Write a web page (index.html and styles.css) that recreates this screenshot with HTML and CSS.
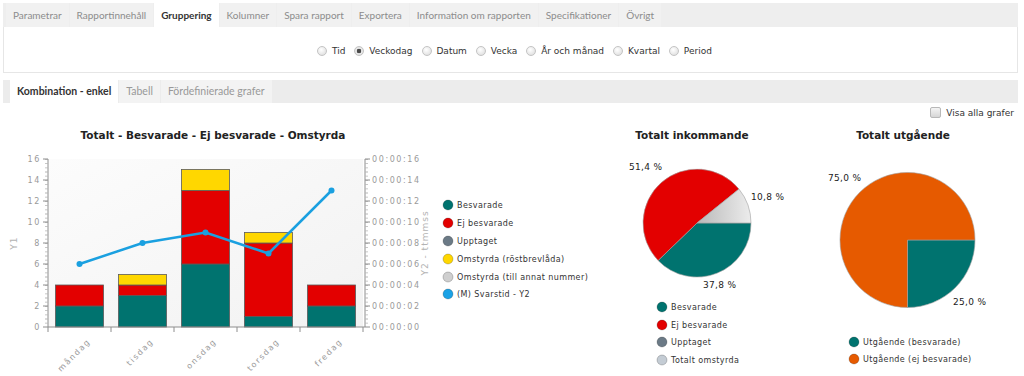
FILE: index.html
```html
<!DOCTYPE html>
<html lang="sv">
<head>
    <meta charset="UTF-8" />
    <meta name="viewport" content="width=device-width, initial-scale=1.0"/>
    <title>Rapport - Gruppering</title>
    <link rel="stylesheet" href="styles.css">
</head>
<body>
    <div class="page">
        <div class="tabbar">
            <div class="tab">Parametrar</div>
            <div class="tab">Rapportinnehåll</div>
            <div class="tab active">Gruppering</div>
            <div class="tab">Kolumner</div>
            <div class="tab">Spara rapport</div>
            <div class="tab">Exportera</div>
            <div class="tab">Information om rapporten</div>
            <div class="tab">Specifikationer</div>
            <div class="tab">Övrigt</div>
        </div>
        <div class="panel">
            <label class="option"><input type="radio" name="grp" class="radio"> Tid</label>
            <label class="option"><input type="radio" name="grp" class="radio" checked> Veckodag</label>
            <label class="option"><input type="radio" name="grp" class="radio"> Datum</label>
            <label class="option"><input type="radio" name="grp" class="radio"> Vecka</label>
            <label class="option"><input type="radio" name="grp" class="radio"> År och månad</label>
            <label class="option"><input type="radio" name="grp" class="radio"> Kvartal</label>
            <label class="option"><input type="radio" name="grp" class="radio"> Period</label>
        </div>

        <div class="tabbar sub">
            <div class="tab active">Kombination - enkel</div>
            <div class="tab light">Tabell</div>
            <div class="tab light">Fördefinierade grafer</div>
        </div>
        <div class="showall">
            <label class="option"><input type="checkbox" class="check"> Visa alla grafer</label>
        </div>

        <div class="charts">
            <!-- combo chart: bars + response time line -->
            <svg class="chart" width="600" height="254" viewBox="3 122 600 254">
                <defs>
                    <linearGradient id="plotbg" x1="0" y1="0" x2="1" y2="1">
                        <stop offset="0" stop-color="#fcfcfc"/>
                        <stop offset="1" stop-color="#f2f2f2"/>
                    </linearGradient>
                </defs>
                <text class="title" x="213" y="139" text-anchor="middle">Totalt - Besvarade - Ej besvarade - Omstyrda</text>
                <rect x="48" y="159" width="315" height="168" fill="url(#plotbg)"/>

                <!-- left axis -->
                <line class="axis" x1="48" y1="159" x2="48" y2="327"/>
                <line class="minor" x1="46.5" y1="159" x2="46.5" y2="327"/>
                <path class="axis" d="M43 159H48M43 180H48M43 201H48M43 222H48M43 243H48M43 264H48M43 285H48M43 306H48M43 327H48"/>
                <g class="ticklabel" text-anchor="end">
                    <text x="41" y="162">16</text>
                    <text x="41" y="183">14</text>
                    <text x="41" y="204">12</text>
                    <text x="41" y="225">10</text>
                    <text x="41" y="246">8</text>
                    <text x="41" y="267">6</text>
                    <text x="41" y="288">4</text>
                    <text x="41" y="309">2</text>
                    <text x="41" y="330">0</text>
                </g>
                <text class="axistitle" x="17" y="243" text-anchor="middle" transform="rotate(-90 17 243)">Y1</text>

                <!-- bars -->
                <g class="bars">
                    <rect class="teal" x="55.5" y="306" width="48" height="21"/>
                    <rect class="red" x="55.5" y="285" width="48" height="21"/>

                    <rect class="teal" x="118.5" y="295.5" width="48" height="31.5"/>
                    <rect class="red" x="118.5" y="285" width="48" height="10.5"/>
                    <rect class="yellow" x="118.5" y="274.5" width="48" height="10.5"/>

                    <rect class="teal" x="181.5" y="264" width="48" height="63"/>
                    <rect class="red" x="181.5" y="190.5" width="48" height="73.5"/>
                    <rect class="yellow" x="181.5" y="169.5" width="48" height="21"/>

                    <rect class="teal" x="244.5" y="316.5" width="48" height="10.5"/>
                    <rect class="red" x="244.5" y="243" width="48" height="73.5"/>
                    <rect class="yellow" x="244.5" y="232.5" width="48" height="10.5"/>

                    <rect class="teal" x="307.5" y="306" width="48" height="21"/>
                    <rect class="red" x="307.5" y="285" width="48" height="21"/>
                </g>

                <!-- bottom axis -->
                <line class="axis" x1="48" y1="327" x2="365" y2="327"/>
                <path class="axis" d="M48 327V332M111 327V332M174 327V332M237 327V332M300 327V332M363 327V332"/>
                <g class="ticklabel" text-anchor="end">
                    <text x="91" y="342" transform="rotate(-45 91 342)">måndag</text>
                    <text x="154" y="342" transform="rotate(-45 154 342)">tisdag</text>
                    <text x="217" y="342" transform="rotate(-45 217 342)">onsdag</text>
                    <text x="280" y="342" transform="rotate(-45 280 342)">torsdag</text>
                    <text x="343" y="342" transform="rotate(-45 343 342)">fredag</text>
                </g>

                <!-- line series -->
                <polyline class="line" points="79.5,264 142.5,243 205.5,232.5 268.5,253.5 331.5,190.5"/>
                <g class="dots">
                    <circle cx="79.5" cy="264" r="3"/>
                    <circle cx="142.5" cy="243" r="3"/>
                    <circle cx="205.5" cy="232.5" r="3"/>
                    <circle cx="268.5" cy="253.5" r="3"/>
                    <circle cx="331.5" cy="190.5" r="3"/>
                </g>

                <!-- right axis -->
                <line class="axis" x1="365" y1="159" x2="365" y2="327"/>
                <line class="minor" x1="366.5" y1="159" x2="366.5" y2="327"/>
                <path class="axis" d="M365 159H370M365 180H370M365 201H370M365 222H370M365 243H370M365 264H370M365 285H370M365 306H370M365 327H370"/>
                <g class="ticklabel">
                    <text x="372" y="162">00:00:16</text>
                    <text x="372" y="183">00:00:14</text>
                    <text x="372" y="204">00:00:12</text>
                    <text x="372" y="225">00:00:10</text>
                    <text x="372" y="246">00:00:08</text>
                    <text x="372" y="267">00:00:06</text>
                    <text x="372" y="288">00:00:04</text>
                    <text x="372" y="309">00:00:02</text>
                    <text x="372" y="330">00:00:00</text>
                </g>
                <text class="axistitle" x="428" y="243" text-anchor="middle" transform="rotate(-90 428 243)">Y2 - ttmmss</text>

                <!-- legend -->
                <g class="legend">
                    <circle class="teal" cx="448" cy="205" r="5"/><text x="457" y="208">Besvarade</text>
                    <circle class="red" cx="448" cy="223" r="5"/><text x="457" y="226">Ej besvarade</text>
                    <circle class="slate" cx="448" cy="241" r="5"/><text x="457" y="244">Upptaget</text>
                    <circle class="yellow" cx="448" cy="259" r="5"/><text x="457" y="262">Omstyrda (röstbrevlåda)</text>
                    <circle class="silver" cx="448" cy="277" r="5"/><text x="457" y="280">Omstyrda (till annat nummer)</text>
                    <circle class="blue" cx="448" cy="294" r="5"/><text x="457" y="297">(M) Svarstid - Y2</text>
                </g>
            </svg>

            <!-- incoming pie -->
            <svg class="chart" width="200" height="254" viewBox="603 122 200 254">
                <defs>
                    <linearGradient id="graygrad" x1="0" y1="0" x2="1" y2="0">
                        <stop offset="0" stop-color="#b9b9b9"/>
                        <stop offset="1" stop-color="#ececec"/>
                    </linearGradient>
                </defs>
                <text class="title" x="692" y="139" text-anchor="middle">Totalt inkommande</text>
                <g class="pie">
                    <path class="teal" d="M697 223L751 223A54 54 0 0 1 658.1 260.5Z"/>
                    <path class="red" d="M697 223L658.1 260.5A54 54 0 1 1 739 189.1Z"/>
                    <path fill="url(#graygrad)" d="M697 223L739 189.1A54 54 0 0 1 751 223Z"/>
                </g>
                <g class="pielabel">
                    <text x="629" y="170">51,4 %</text>
                    <text x="751" y="200">10,8 %</text>
                    <text x="703" y="288">37,8 %</text>
                </g>
                <g class="legend">
                    <circle class="teal" cx="662" cy="307" r="5"/><text x="671" y="310">Besvarade</text>
                    <circle class="red" cx="662" cy="325" r="5"/><text x="671" y="328">Ej besvarade</text>
                    <circle class="slate" cx="662" cy="342" r="5"/><text x="671" y="345">Upptaget</text>
                    <circle class="pale" cx="662" cy="360" r="5"/><text x="671" y="363">Totalt omstyrda</text>
                </g>
            </svg>

            <!-- outgoing pie -->
            <svg class="chart" width="215" height="254" viewBox="803 122 215 254">
                <text class="title" x="903" y="139" text-anchor="middle">Totalt utgående</text>
                <g class="pie">
                    <path class="teal" d="M907.5 240L975 240A67.5 67.5 0 0 1 907.5 307.5Z"/>
                    <path class="orange" d="M907.5 240L907.5 307.5A67.5 67.5 0 1 1 975 240Z"/>
                </g>
                <g class="pielabel">
                    <text x="828" y="181">75,0 %</text>
                    <text x="953" y="305">25,0 %</text>
                </g>
                <g class="legend">
                    <circle class="teal" cx="854" cy="342" r="5"/><text x="863" y="345">Utgående (besvarade)</text>
                    <circle class="orange" cx="854" cy="359" r="5"/><text x="863" y="362">Utgående (ej besvarade)</text>
                </g>
            </svg>
        </div>
    </div>
</body>
</html>
```

FILE: styles.css
```css
body {
    margin: 0;
    font-family: Lato, "Open Sans", sans-serif;
    background: #fff;
    color: #333;
    overflow: hidden;
}

.page {
    padding: 3px 6px 0 3px;
}

/* tab strips */
.tabbar {
    display: flex;
    height: 24px;
    background: #eeeeee;
    padding-left: 3px;
}

.tab {
    padding: 0 7px;
    line-height: 24px;
    font-size: 10px;
    color: #8c8c8c;
    background: #f1f1f1;
    margin-right: 1px;
}

.tab.active {
    background: #fff;
    color: #333;
    font-weight: bold;
}

.tabbar.sub {
    margin-top: 7px;
    height: 23px;
    padding-left: 7px;
    background: #ececec;
}

.tabbar.sub .tab {
    line-height: 23px;
    font-size: 10.5px;
}

.tab.light {
    background: #f3f3f3;
    color: #999;
}

/* grouping options */
.panel {
    height: 45px;
    border: 1px solid #e6e6e6;
    border-top: none;
    display: flex;
    justify-content: center;
    align-items: center;
    gap: 9px;
    padding-left: 8px;
}

.option {
    display: flex;
    align-items: center;
    font-family: "DejaVu Sans", Verdana, sans-serif;
    font-size: 9px;
    color: #333;
    white-space: pre;
}

.panel .option {
    padding-top: 2px;
}

.radio {
    appearance: none;
    width: 10px;
    height: 10px;
    margin: 0 2px 0 0;
    border-radius: 50%;
    border: 1px solid #c4c4c4;
    background: radial-gradient(circle at 40% 35%, #fff, #d9d9d9);
}

.radio:checked {
    background: radial-gradient(circle, #4a4a4a 0 2px, #ececec 2.6px, #d4d4d4);
}

.showall {
    height: 19px;
    display: flex;
    justify-content: flex-end;
    align-items: center;
    padding-right: 4px;
}

.check {
    appearance: none;
    width: 11px;
    height: 11px;
    margin: 0 2px 0 0;
    border: 1px solid #b8b8b8;
    border-radius: 2px;
    background: linear-gradient(#f4f4f4, #d6d6d6);
}

/* charts */
.charts {
    display: flex;
}

.chart {
    display: block;
    font-family: "DejaVu Sans", Verdana, sans-serif;
}

.title {
    font-size: 10.5px;
    font-weight: bold;
    fill: #222;
}

.axis {
    stroke: #8e8e8e;
    stroke-width: 1;
    fill: none;
}

.minor {
    stroke: #b5b5b5;
    stroke-width: 3;
    stroke-dasharray: 0.8 3.4;
}

.ticklabel {
    font-size: 8px;
    letter-spacing: 1.6px;
    fill: #9a9a9a;
}

.axistitle {
    font-size: 9px;
    letter-spacing: 1px;
    fill: #b3b3b3;
}

.bars rect {
    stroke: #5a5a5a;
    stroke-width: 0.8;
}

.teal { fill: #00736f; }
.red { fill: #e30000; }
.yellow { fill: #ffd700; }
.slate { fill: #6b7a86; }
.silver { fill: #cfcfcf; }
.pale { fill: #c4ccd4; }
.blue { fill: #1ba2e6; }
.orange { fill: #e65a00; }

.line {
    fill: none;
    stroke: #1aa0e0;
    stroke-width: 2.5;
}

.dots circle {
    fill: #1aa0e0;
}

.legend circle {
    stroke: rgba(0, 0, 0, 0.25);
    stroke-width: 0.8;
}

.legend text {
    font-size: 8px;
    letter-spacing: 0.4px;
    fill: #333;
}

.pie path {
    stroke: #a0a0a0;
    stroke-width: 0.6;
}

.pielabel {
    font-size: 9px;
    letter-spacing: 0.3px;
    fill: #222;
}
```
